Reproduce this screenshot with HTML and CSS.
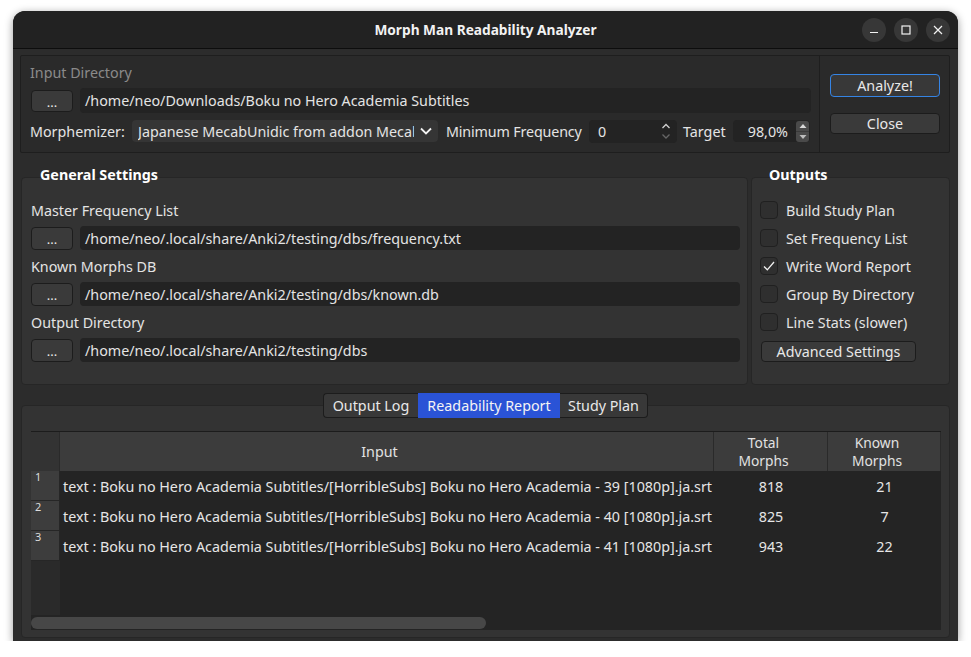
FILE: index.html
```html
<!DOCTYPE html>
<html>
<head>
<meta charset="utf-8">
<title>Morph Man Readability Analyzer</title>
<link rel="stylesheet" href="styles.css">
</head>
<body>
<div class="window">
  <div class="titlebar">
    <div class="title">Morph Man Readability Analyzer</div>
    <div class="wctrls">
      <span class="wbtn"><svg width="10" height="10" viewBox="0 0 10 10"><line x1="1" y1="7.5" x2="9" y2="7.5" stroke="#f2f2f2" stroke-width="1.2"/></svg></span>
      <span class="wbtn"><svg width="10" height="10" viewBox="0 0 10 10"><rect x="1" y="1" width="8" height="8" fill="none" stroke="#f2f2f2" stroke-width="1.2"/></svg></span>
      <span class="wbtn"><svg width="10" height="10" viewBox="0 0 10 10"><path d="M1 1 L9 9 M9 1 L1 9" stroke="#f2f2f2" stroke-width="1.2"/></svg></span>
    </div>
  </div>
  <div class="content">
    <div class="top">
      <div class="top-left">
        <div class="label dim">Input Directory</div>
        <div class="filerow big">
          <span class="btn dots">...</span>
          <div class="field">/home/neo/Downloads/Boku no Hero Academia Subtitles</div>
        </div>
        <div class="morphrow">
          <span class="lbl lbl-morph">Morphemizer:</span>
          <div class="combo">
            <span class="combo-text">Japanese MecabUnidic from addon Mecab</span>
            <span class="combo-arrow"><svg width="12" height="8" viewBox="0 0 12 8"><path d="M1 1.5 L6 6.5 L11 1.5" fill="none" stroke="#f0f0f0" stroke-width="1.8"/></svg></span>
          </div>
          <span class="lbl lbl-min">Minimum Frequency</span>
          <div class="spin spin-min">
            <span class="spin-val">0</span>
            <span class="spin-chev">
              <svg width="10" height="18" viewBox="0 0 10 18"><path d="M1.5 6 L5 2.5 L8.5 6" fill="none" stroke="#d0d0d0" stroke-width="1.3"/><path d="M1.5 12.5 L5 16 L8.5 12.5" fill="none" stroke="#666" stroke-width="1.3"/></svg>
            </span>
          </div>
          <span class="lbl lbl-target">Target</span>
          <div class="spin spin-target">
            <span class="spin-val right">98,0%</span>
            <span class="spinbtns">
              <span class="sb"><svg width="8" height="6" viewBox="0 0 8 6"><path d="M0.5 5 L4 1 L7.5 5 Z" fill="#d8d8d8"/></svg></span>
              <span class="sb"><svg width="8" height="6" viewBox="0 0 8 6"><path d="M0.5 1 L4 5 L7.5 1 Z" fill="#bdbdbd"/></svg></span>
            </span>
          </div>
        </div>
      </div>
      <div class="top-right">
        <span class="btn action primary">Analyze!</span>
        <span class="btn action close">Close</span>
      </div>
    </div>

    <div class="groups">
      <div class="group general">
        <div class="group-title">General Settings</div>
        <div class="label">Master Frequency List</div>
        <div class="filerow">
          <span class="btn dots">...</span>
          <div class="field">/home/neo/.local/share/Anki2/testing/dbs/frequency.txt</div>
        </div>
        <div class="label gap">Known Morphs DB</div>
        <div class="filerow">
          <span class="btn dots">...</span>
          <div class="field">/home/neo/.local/share/Anki2/testing/dbs/known.db</div>
        </div>
        <div class="label gap">Output Directory</div>
        <div class="filerow">
          <span class="btn dots">...</span>
          <div class="field">/home/neo/.local/share/Anki2/testing/dbs</div>
        </div>
      </div>
      <div class="group outputs">
        <div class="group-title">Outputs</div>
        <div class="check-row"><span class="cbox"></span><span>Build Study Plan</span></div>
        <div class="check-row"><span class="cbox"></span><span>Set Frequency List</span></div>
        <div class="check-row"><span class="cbox"><svg width="16" height="16" viewBox="0 0 16 16"><path d="M3 8.5 L6.3 11.8 L13 4" fill="none" stroke="#f0f0f0" stroke-width="1.3"/></svg></span><span>Write Word Report</span></div>
        <div class="check-row"><span class="cbox"></span><span>Group By Directory</span></div>
        <div class="check-row"><span class="cbox"></span><span>Line Stats (slower)</span></div>
        <span class="btn adv">Advanced Settings</span>
      </div>
    </div>

    <div class="tabs">
      <span class="tab t1">Output Log</span>
      <span class="tab t2 active">Readability Report</span>
      <span class="tab t3">Study Plan</span>
    </div>
    <div class="pane">
      <div class="table">
        <div class="corner"></div>
        <div class="hcell">Input</div>
        <div class="hcell"><span class="hl">Total</span><span class="hl">Morphs</span></div>
        <div class="hcell"><span class="hl">Known</span><span class="hl">Morphs</span></div>

        <div class="vh"><span>1</span></div>
        <div class="cell">text : Boku no Hero Academia Subtitles/[HorribleSubs] Boku no Hero Academia - 39 [1080p].ja.srt</div>
        <div class="cell num">818</div>
        <div class="cell num">21</div>

        <div class="vh"><span>2</span></div>
        <div class="cell">text : Boku no Hero Academia Subtitles/[HorribleSubs] Boku no Hero Academia - 40 [1080p].ja.srt</div>
        <div class="cell num">825</div>
        <div class="cell num">7</div>

        <div class="vh"><span>3</span></div>
        <div class="cell">text : Boku no Hero Academia Subtitles/[HorribleSubs] Boku no Hero Academia - 41 [1080p].ja.srt</div>
        <div class="cell num">943</div>
        <div class="cell num">22</div>

        <div class="vh-fill"></div>
        <div class="fill"></div>

        <div class="hscroll"><span class="handle"></span></div>
      </div>
    </div>
  </div>
</div>
</body>
</html>
```
FILE: styles.css
```css
* { box-sizing: border-box; }
html, body { margin: 0; background: #ffffff; }
body {
  font-family: "Noto Sans", "DejaVu Sans", sans-serif;
  font-size: 14.3px;
  color: #e4e4e4;
}
.window {
  margin: 11px 0 0 13px;
  width: 945px;
  height: 630px;
  border-radius: 12px 12px 0 0;
  background: #2c2c2c;
  box-shadow: 0 2px 9px rgba(0, 0, 0, 0.4);
  overflow: hidden;
  display: flex;
  flex-direction: column;
}
.titlebar {
  height: 38px;
  flex: none;
  background: #222222;
  border-bottom: 1px solid #0d0d0d;
  display: grid;
  grid-template-columns: 1fr auto 1fr;
  align-items: center;
  padding: 0 8px;
}
.title { grid-column: 2; font-weight: 700; font-size: 13.7px; color: #f2f2f2; }
.wctrls { grid-column: 3; justify-self: end; display: flex; gap: 8px; }
.wbtn {
  width: 24px; height: 24px; border-radius: 50%;
  background: #373737;
  display: flex; align-items: center; justify-content: center;
}
.content {
  flex: 1;
  display: flex;
  flex-direction: column;
  padding: 6px 8px 3px 7px;
}
.top {
  display: flex;
  height: 98px;
  flex: none;
  border: 1px solid #1e1e1e;
  border-radius: 2px;
  background: #2a2a2a;
}
.top-left {
  flex: 1;
  padding: 8px 8px 0 9px;
  border-right: 1px solid #1e1e1e;
}
.top-right {
  width: 129px;
  flex: none;
  padding: 18px 0 0 10px;
  display: flex;
  flex-direction: column;
  gap: 16px;
}
.label { height: 18px; line-height: 18px; white-space: nowrap; }
.label.gap { margin-top: 8px; }
.dim { color: #8a8a8a; }
.filerow {
  display: flex; align-items: center; gap: 7px;
  margin-top: 6px; height: 24px;
}
.top-left .filerow { padding-left: 1px; }
.filerow.big { height: 25px; }
.btn {
  display: inline-flex; align-items: center; justify-content: center;
  background: #3a3a3a;
  border: 1px solid #1c1c1c;
  border-radius: 4px;
  color: #e8e8e8;
  white-space: nowrap;
}
.dots { width: 42px; height: 22px; flex: none; font-size: 13px; padding-top: 2px; }
.filerow .dots { height: 23px; }
.filerow.big .dots { height: 22px; }
.field {
  flex: 1; height: 100%;
  background: #232323;
  border-radius: 4px;
  padding-left: 5px;
  display: flex; align-items: center;
  white-space: nowrap; overflow: hidden;
}
.morphrow {
  display: flex; align-items: center;
  height: 24px; margin-top: 6px;
}
.lbl { flex: none; white-space: nowrap; }
.lbl-morph { width: 102px; }
.lbl-min { width: 151px; padding-left: 8px; letter-spacing: -0.15px; }
.lbl-target { width: 56px; padding-left: 6px; }
.combo {
  width: 306px; height: 22px; flex: none;
  background: #353535;
  border-radius: 4px;
  display: flex; align-items: center;
  padding-left: 6px;
  overflow: hidden;
}
.combo-text { width: 276px; flex: none; overflow: hidden; white-space: nowrap; }
.combo-arrow { flex: 1; display: flex; justify-content: center; padding-right: 1px; }
.spin {
  flex: none; height: 23px;
  background: #232323;
  border-radius: 4px;
  display: flex; align-items: center;
}
.spin-min { width: 88px; padding-left: 9px; }
.spin-min .spin-val { flex: 1; }
.spin-chev { width: 22px; display: flex; justify-content: center; }
.spin-target { width: 77px; height: 22px; padding-right: 1px; }
.spin-val.right { flex: 1; text-align: right; padding-right: 8px; }
.spinbtns {
  width: 13px; height: 21px;
  background: #4a4a4a;
  border-radius: 3px;
  display: flex; flex-direction: column;
}
.sb { flex: 1; display: flex; align-items: center; justify-content: center; }
.sb + .sb { border-top: 1px solid #3a3a3a; }
.action { width: 110px; height: 21px; }
.primary { height: 23px; border: 1px solid #3584e4; background: #383838; }

.groups {
  display: flex; gap: 3px;
  margin: 24px 0 0 1px;
  height: 208px; flex: none;
}
.group {
  position: relative;
  border: 1px solid #262626;
  border-radius: 4px;
  background: #333333;
}
.general { width: 727px; padding: 24px 7px 0 9px; }
.outputs { flex: 1; padding: 18px 0 0 8px; display: flex; flex-direction: column; align-items: flex-start; }
.group-title {
  position: absolute;
  top: -12px; left: 18px;
  line-height: 18px;
  font-weight: 700;
  color: #ffffff;
}
.outputs .group-title { left: 17px; }
.check-row { height: 28px; display: flex; align-items: center; gap: 8px; }
.cbox {
  width: 18px; height: 18px;
  border: 1px solid #202020;
  border-radius: 4px;
  background: #2f2f2f;
  display: flex; align-items: center; justify-content: center;
}
.adv { width: 155px; height: 21px; margin: 5px 0 0 1px; }

.tabs {
  position: relative; z-index: 1;
  display: flex; justify-content: center;
  margin-top: 8px; height: 25px; flex: none;
  padding-left: 1px;
}
.tab {
  display: flex; align-items: center; justify-content: center;
  height: 25px;
  background: #383838;
  border: 1px solid #1c1c1c;
  color: #e8e8e8;
  white-space: nowrap;
}
.t1 { width: 95px; border-radius: 4px 0 0 4px; border-right: none; }
.t2 { width: 142px; }
.t3 { width: 88px; border-radius: 0 4px 4px 0; border-left: none; }
.tab.active { background: #2a53d6; border-color: #2a53d6; color: #f4f4f4; }

.pane {
  flex: 1;
  margin: -13px 0 0 1px;
  background: #333333;
  border: 1px solid #262626;
  border-radius: 4px;
  padding: 25px 8px 7px 9px;
  display: flex;
}
.table {
  flex: 1;
  display: grid;
  grid-template-columns: 29px 654px 114px 113px;
  grid-template-rows: 39px 30px 30px 30px 1fr 15px;
  background: #242424;
  border-top: 1px solid #1c1c1c;
  overflow: hidden;
}
.corner { background: #333333; border-right: 1px solid #2a2a2a; }
.hcell {
  background: #3c3c3c;
  border-right: 1px solid #2a2a2a;
  display: flex; flex-direction: column; align-items: center; justify-content: center;
  text-align: center;
  padding-right: 14px;
  color: #e2e2e2;
}
.hl { display: block; height: 18px; line-height: 18px; font-size: 13.8px; }
.vh {
  background: #3d3d3d;
  border-bottom: 1px solid #262626;
  border-right: 1px solid #262626;
  padding: 0 0 0 4px;
}
.vh span { display: block; font-size: 11px; line-height: 12px; color: #dcdcdc; }
.cell {
  display: flex; align-items: center;
  padding-left: 3px;
  white-space: nowrap; overflow: hidden;
  color: #e6e6e6;
}
.cell.num { justify-content: center; padding-left: 0; }
.vh-fill { background: #2a2a2a; }
.fill { grid-column: 2 / 5; }
.hscroll { grid-column: 1 / 5; padding-top: 2px; }
.handle { display: block; width: 455px; height: 12px; border-radius: 6px; background: #474747; }
```
